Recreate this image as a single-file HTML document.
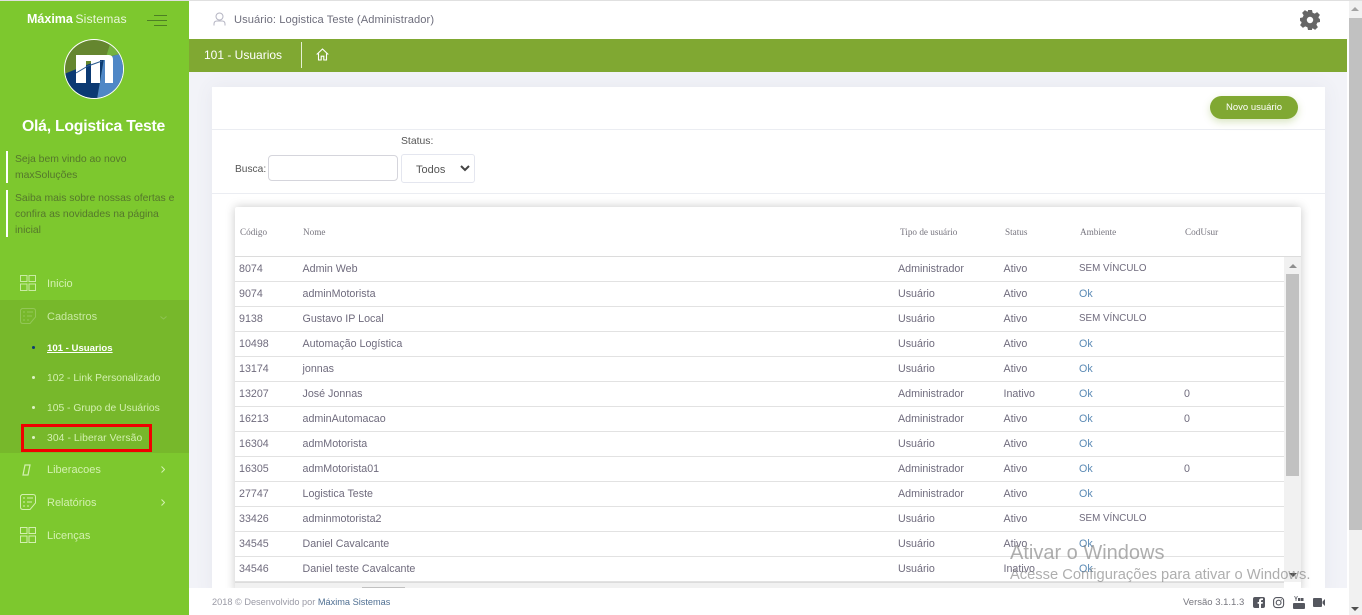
<!DOCTYPE html>
<html lang="pt-BR">
<head>
<meta charset="utf-8">
<title>Máxima Sistemas</title>
<style>
*{box-sizing:border-box}
html,body{margin:0;padding:0;width:1362px;height:615px;overflow:hidden;background:#f2f3f8;font-family:"Liberation Sans",sans-serif;color:#6f6b7d}
.a{position:absolute;white-space:nowrap}
#side{position:absolute;left:0;top:0;width:189px;height:615px;background:#7dc82e}
.menu{color:#d3f0b0;font-size:11px;line-height:14px}
.sub{color:#d3f0b0;font-size:10.3px;line-height:14px}
.row{position:absolute;left:235px;width:1050px;height:25px;border-bottom:1px solid #e2e2e2;font-size:10.7px}
.row span{position:absolute;top:5px;line-height:14px;white-space:nowrap;color:#6f6b7d}
.c1{left:4px}.c2{left:67.5px}.c3{left:663px}.c4{left:768.5px}.c5{left:844px}.c6{left:949px}
.ok{color:#5b8ab5!important}
.sv{font-size:9.8px}
.th{position:absolute;top:225px;font:9.2px/14px "Liberation Serif",serif;color:#77757f;white-space:nowrap}
</style>
</head>
<body>
<div class="a" style="left:0;top:0;width:1362px;height:1px;background:#e0e0e0;z-index:9"></div>

<!-- sidebar -->
<div id="side">
  <div class="a" style="left:27px;top:12px;font-size:12.5px;line-height:15px;color:#fff"><b>Máxima</b> <span style="color:#eaf7da;font-size:12.3px;letter-spacing:.1px;margin-left:-1px">Sistemas</span></div>
  <svg class="a" style="left:146px;top:14px" width="22" height="13" viewBox="0 0 22 13"><path d="M8 1.5H21M1 6.5H21M8 11.5H21" stroke="#4d7f24" stroke-width="1" fill="none"/></svg>
  <svg class="a" style="left:64px;top:39px" width="60" height="60" viewBox="0 0 60 60">
    <defs><clipPath id="cc"><circle cx="30" cy="30" r="29"/></clipPath></defs>
    <circle cx="30" cy="30" r="30" fill="#fff"/>
    <g clip-path="url(#cc)">
      <rect width="60" height="60" fill="#65862f"/>
      <path d="M47 2L60 14L42 18Z" fill="#74b340"/>
      <path d="M40 19L60 14V60H33Z" fill="#4f87c6"/>
      <path d="M0 35L40 19L33 60H0Z" fill="#0b3a73"/>
    </g>
    <path d="M12 16H45Q49 16 49 21V44H41V21H36V44H27V22H22V44H12Z" fill="#fff"/>
    <path d="M12 34L24 27L38 22" stroke="#2a5a8f" stroke-width="1" fill="none"/>
  </svg>
  <div class="a" style="left:22px;top:117px;font-size:15.8px;line-height:20px;font-weight:bold;color:#fff;letter-spacing:-.25px">Olá, Logistica Teste</div>
  <div class="a" style="left:6px;top:151px;width:2px;height:32px;background:#fff"></div>
  <div class="a" style="left:6px;top:190px;width:2px;height:47px;background:#fff"></div>
  <div class="a" style="left:15px;top:152px;font-size:10.4px;line-height:16px;color:#55772c">Seja bem vindo ao novo<br>maxSoluções</div>
  <div class="a" style="left:15px;top:191px;font-size:10.4px;line-height:16px;color:#55772c">Saiba mais sobre nossas ofertas e<br>confira as novidades na página<br>inicial</div>

  <div class="a" style="left:0;top:300px;width:189px;height:153px;background:#77b82b"></div>

  <svg class="a" style="left:20px;top:275px" width="16" height="16" viewBox="0 0 16 16" fill="none" stroke="#c9eba3"><path d="M.5.5H7V6.5H.5ZM9 .5H15.5V6.5H9ZM.5 9H7V15.5H.5ZM9 9H15.5V15.5H9Z"/></svg>
  <div class="a menu" style="left:47px;top:277px">Inicio</div>

  <svg class="a" style="left:20px;top:308px" width="16" height="16" viewBox="0 0 16 16" fill="none" stroke="#93c757"><path d="M2 .5H13Q15.5.5 15.5 3V9L10 15.5H3Q.5 15.5.5 13V2ZM3 4H5M7 4H13M3 8H5M7 8H12M3 12H5M7 12H9"/></svg>
  <div class="a menu" style="left:47px;top:310px;color:#c8e9a2">Cadastros</div>
  <svg class="a" style="left:160px;top:316px" width="7" height="4" viewBox="0 0 7 4"><path d="M.5.5L3.5 3L6.5.5" stroke="#8fc354" fill="none"/></svg>

  <div class="a" style="left:32px;top:346px;width:3px;height:3px;border-radius:50%;background:#0b3a73"></div>
  <div class="a" style="left:47px;top:342px;font-size:9.6px;line-height:14px;color:#fff;font-weight:bold;text-decoration:underline">101 - Usuarios</div>
  <div class="a" style="left:32px;top:376px;width:3px;height:3px;border-radius:50%;background:#def3c6"></div>
  <div class="a sub" style="left:47px;top:372px">102 - Link Personalizado</div>
  <div class="a" style="left:32px;top:406px;width:3px;height:3px;border-radius:50%;background:#def3c6"></div>
  <div class="a sub" style="left:47px;top:402px">105 - Grupo de Usuários</div>
  <div class="a" style="left:32px;top:436px;width:3px;height:3px;border-radius:50%;background:#def3c6"></div>
  <div class="a sub" style="left:47px;top:432px;letter-spacing:.1px">304 - Liberar Versão</div>
  <div class="a" style="left:21px;top:424px;width:131px;height:28px;border:3px solid #f00000"></div>

  <svg class="a" style="left:22px;top:464px" width="9" height="12" viewBox="0 0 9 12" fill="none" stroke="#d3f0b0" stroke-width="1.2"><path d="M3 1H8L6 11H1Z"/></svg>
  <div class="a menu" style="left:47px;top:463px">Liberacoes</div>
  <svg class="a" style="left:161px;top:466px" width="4" height="7" viewBox="0 0 4 7"><path d="M.5.5L3.5 3.5L.5 6.5" stroke="#d3f0b0" fill="none"/></svg>

  <svg class="a" style="left:20px;top:494px" width="16" height="16" viewBox="0 0 16 16" fill="none" stroke="#d3f0b0"><path d="M2 .5H13Q15.5.5 15.5 3V9L10 15.5H3Q.5 15.5.5 13V2ZM3 4H5M7 4H13M3 8H5M7 8H12M3 12H5M7 12H9"/></svg>
  <div class="a menu" style="left:47px;top:496px">Relatórios</div>
  <svg class="a" style="left:161px;top:499px" width="4" height="7" viewBox="0 0 4 7"><path d="M.5.5L3.5 3.5L.5 6.5" stroke="#d3f0b0" fill="none"/></svg>

  <svg class="a" style="left:20px;top:527px" width="16" height="16" viewBox="0 0 16 16" fill="none" stroke="#d3f0b0"><path d="M.5.5H7V6.5H.5ZM9 .5H15.5V6.5H9ZM.5 9H7V15.5H.5ZM9 9H15.5V15.5H9Z"/></svg>
  <div class="a menu" style="left:47px;top:529px">Licenças</div>
</div>

<!-- header -->
<div class="a" style="left:189px;top:0;width:1158px;height:39px;background:#fff"></div>
<svg class="a" style="left:213px;top:12px" width="13" height="14" viewBox="0 0 13 14" fill="none" stroke="#b5b5c3"><circle cx="6.5" cy="4.5" r="3.5"/><path d="M1 13.5V12Q1 9 4 9H9Q12 9 12 12V13.5"/></svg>
<div class="a" style="left:234px;top:13px;font-size:11.15px;line-height:14px;color:#6f6f7d;letter-spacing:.07px">Usuário: Logistica Teste (Administrador)</div>
<svg class="a" style="left:1300px;top:10px" width="20" height="20" viewBox="0 0 20 20"><path fill="#666" fill-rule="evenodd" d="M8 0H12L12.6 2.7L14.8 3.6L17.1 2.1L19.9 4.9L18.4 7.2L19.3 9.4L20 8V12L17.3 12.6L16.4 14.8L17.9 17.1L15.1 19.9L12.8 18.4L12 18.7L12 20H8L7.4 17.3L5.2 16.4L2.9 17.9L.1 15.1L1.6 12.8L.7 10.6L0 12V8L2.7 7.4L3.6 5.2L2.1 2.9L4.9.1L7.2 1.6L8 1.3ZM10 6.8A3.2 3.2 0 1 0 10 13.2A3.2 3.2 0 1 0 10 6.8Z"/></svg>

<div class="a" style="left:189px;top:39px;width:1158px;height:33px;background:#80a832"></div>
<div class="a" style="left:204px;top:47px;font-size:12px;line-height:16px;color:#fff">101 - Usuarios</div>
<div class="a" style="left:301px;top:42px;width:1px;height:26px;background:#e6f0d4"></div>
<svg class="a" style="left:316px;top:48px" width="13" height="13" viewBox="0 0 13 13" fill="none" stroke="#fff" stroke-width="1.1"><path d="M.7 6.5L6.5 1L12.3 6.5M2.5 5.5V12H5.2V8.2H7.8V12H10.5V5.5"/></svg>

<!-- main card -->
<div class="a" style="left:212px;top:87px;width:1113px;height:510px;background:#fff;box-shadow:0 0 18px rgba(80,80,120,.07)"></div>
<div class="a" style="left:212px;top:129px;width:1113px;height:1px;background:#ebedf2"></div>
<div class="a" style="left:212px;top:193px;width:1113px;height:1px;background:#ebedf2"></div>
<div class="a" style="left:1210px;top:96px;width:88px;height:23px;border-radius:12px;background:#80a832;color:#fff;text-align:center;font-size:9.5px;line-height:23px;box-shadow:0 3px 8px rgba(128,168,50,.3)">Novo usuário</div>
<div class="a" style="left:401px;top:135px;font-size:10.4px;line-height:14px;color:#555">Status:</div>
<div class="a" style="left:235px;top:163px;font-size:10.2px;line-height:14px;color:#555">Busca:</div>
<div class="a" style="left:268px;top:155px;width:130px;height:26px;border:1px solid #d5d5dc;border-radius:4px;background:#fff"></div>
<div class="a" style="left:401px;top:154px;width:74px;height:29px;border:1px solid #e4e6ef;border-radius:3px;background:#fff"></div>
<div class="a" style="left:416px;top:163px;font-size:11px;line-height:14px;color:#555">Todos</div>
<svg class="a" style="left:460px;top:165px" width="10" height="7" viewBox="0 0 10 7"><path d="M1 1L5 5L9 1" stroke="#444" stroke-width="2" fill="none"/></svg>

<!-- table -->
<div class="a" style="left:235px;top:207px;width:1066px;height:385px;background:#fff;border-radius:2px;box-shadow:0 0 10px rgba(0,0,0,.22)"></div>
<div class="th" style="left:240px">Código</div>
<div class="th" style="left:303px">Nome</div>
<div class="th" style="left:900px">Tipo de usuário</div>
<div class="th" style="left:1005px">Status</div>
<div class="th" style="left:1080px">Ambiente</div>
<div class="th" style="left:1185px">CodUsur</div>
<div class="a" style="left:235px;top:256px;width:1066px;height:1px;background:#dcdcdc"></div>

<div class="row" style="top:257px"><span class="c1">8074</span><span class="c2">Admin Web</span><span class="c3">Administrador</span><span class="c4">Ativo</span><span class="c5 sv">SEM VÍNCULO</span></div>
<div class="row" style="top:282px"><span class="c1">9074</span><span class="c2">adminMotorista</span><span class="c3">Usuário</span><span class="c4">Ativo</span><span class="c5 ok">Ok</span></div>
<div class="row" style="top:307px"><span class="c1">9138</span><span class="c2">Gustavo IP Local</span><span class="c3">Usuário</span><span class="c4">Ativo</span><span class="c5 sv">SEM VÍNCULO</span></div>
<div class="row" style="top:332px"><span class="c1">10498</span><span class="c2">Automação Logística</span><span class="c3">Usuário</span><span class="c4">Ativo</span><span class="c5 ok">Ok</span></div>
<div class="row" style="top:357px"><span class="c1">13174</span><span class="c2">jonnas</span><span class="c3">Usuário</span><span class="c4">Ativo</span><span class="c5 ok">Ok</span></div>
<div class="row" style="top:382px"><span class="c1">13207</span><span class="c2">José Jonnas</span><span class="c3">Administrador</span><span class="c4">Inativo</span><span class="c5 ok">Ok</span><span class="c6">0</span></div>
<div class="row" style="top:407px"><span class="c1">16213</span><span class="c2">adminAutomacao</span><span class="c3">Administrador</span><span class="c4">Ativo</span><span class="c5 ok">Ok</span><span class="c6">0</span></div>
<div class="row" style="top:432px"><span class="c1">16304</span><span class="c2">admMotorista</span><span class="c3">Usuário</span><span class="c4">Ativo</span><span class="c5 ok">Ok</span></div>
<div class="row" style="top:457px"><span class="c1">16305</span><span class="c2">admMotorista01</span><span class="c3">Administrador</span><span class="c4">Ativo</span><span class="c5 ok">Ok</span><span class="c6">0</span></div>
<div class="row" style="top:482px"><span class="c1">27747</span><span class="c2">Logistica Teste</span><span class="c3">Administrador</span><span class="c4">Ativo</span><span class="c5 ok">Ok</span></div>
<div class="row" style="top:507px"><span class="c1">33426</span><span class="c2">adminmotorista2</span><span class="c3">Usuário</span><span class="c4">Ativo</span><span class="c5 sv">SEM VÍNCULO</span></div>
<div class="row" style="top:532px"><span class="c1">34545</span><span class="c2">Daniel Cavalcante</span><span class="c3">Usuário</span><span class="c4">Ativo</span><span class="c5 ok">Ok</span></div>
<div class="row" style="top:557px"><span class="c1">34546</span><span class="c2">Daniel teste Cavalcante</span><span class="c3">Usuário</span><span class="c4">Inativo</span><span class="c5 ok">Ok</span></div>

<!-- inner scrollbars -->
<div class="a" style="left:1284px;top:257px;width:17px;height:325px;background:#f1f1f1"></div>
<div class="a" style="left:1286px;top:274px;width:13px;height:202px;background:#c1c1c1"></div>
<div class="a" style="left:1289px;top:264px;border:4px solid transparent;border-top:0;border-bottom:4px solid #8f8f8f"></div>
<div class="a" style="left:1289px;top:573px;border:4px solid transparent;border-bottom:0;border-top:4px solid #505050"></div>
<div class="a" style="left:235px;top:582px;width:1049px;height:6px;background:#f1f1f1;border-top:1px solid #dcdcdc"></div>
<div class="a" style="left:362px;top:587px;width:43px;height:1px;background:#c1c1c1"></div>

<!-- footer -->
<div class="a" style="left:189px;top:588px;width:1158px;height:27px;background:#fff"></div>
<div class="a" style="left:212px;top:596px;font-size:9.2px;line-height:13px;color:#9a9aa5">2018 © Desenvolvido por <span style="color:#4f6f92">Máxima Sistemas</span></div>
<div class="a" style="left:1183px;top:596px;font-size:9.5px;line-height:14px;color:#77777f">Versão 3.1.1.3</div>
<svg class="a" style="left:1253px;top:596px" width="72" height="13" viewBox="0 0 72 13">
  <path fill="#55575f" fill-rule="evenodd" d="M2 1H10Q12 1 12 3V10Q12 12 10 12H8V7.8H9.6L9.9 6H8V4.9Q8 4 9 4H10V2.4H8.5Q6 2.4 6 4.8V6H4.6V7.8H6V12H2Q0 12 0 10V3Q0 1 2 1Z"/>
  <rect x="20.6" y="1.6" width="10" height="10" rx="3" fill="none" stroke="#55575f" stroke-width="1.1"/><circle cx="25.6" cy="6.6" r="2.4" fill="none" stroke="#55575f" stroke-width="1.1"/><circle cx="28.4" cy="3.8" r=".6" fill="#55575f"/>
  <path fill="#55575f" d="M41 7H51Q52 7 52 8V12Q52 13 51 13H41Q40 13 40 12V8Q40 7 41 7ZM42 0L43 2.5L44 0H44.8L43.4 3.4V5H42.6V3.4L41.2 0ZM45 2H47.5V5H45ZM48 2H50.5V5H48Z"/>
  <path fill="#55575f" d="M60 3Q60 2 61 2H68Q69 2 69 3V10Q69 11 68 11H61Q60 11 60 10ZM69.5 5.5L72 3V10L69.5 7.5Z"/>
</svg>

<!-- page scrollbar -->
<div class="a" style="left:1347px;top:1px;width:2px;height:614px;background:#fff"></div>
<div class="a" style="left:1349px;top:1px;width:13px;height:614px;background:#f1f1f1"></div>
<div class="a" style="left:1349px;top:18px;width:13px;height:512px;background:#c1c1c1"></div>
<div class="a" style="left:1351px;top:7px;border:4px solid transparent;border-top:0;border-bottom:4px solid #a3a3a3"></div>
<div class="a" style="left:1351px;top:607px;border:4px solid transparent;border-bottom:0;border-top:4px solid #505050"></div>

<!-- watermark -->
<div class="a" style="left:1010px;top:541px;font-size:20px;line-height:24px;color:rgba(120,120,120,.6);z-index:8">Ativar o Windows</div>
<div class="a" style="left:1010px;top:566px;font-size:14.7px;line-height:18px;color:rgba(120,120,120,.6);z-index:8">Acesse Configurações para ativar o Windows.</div>
</body>
</html>
